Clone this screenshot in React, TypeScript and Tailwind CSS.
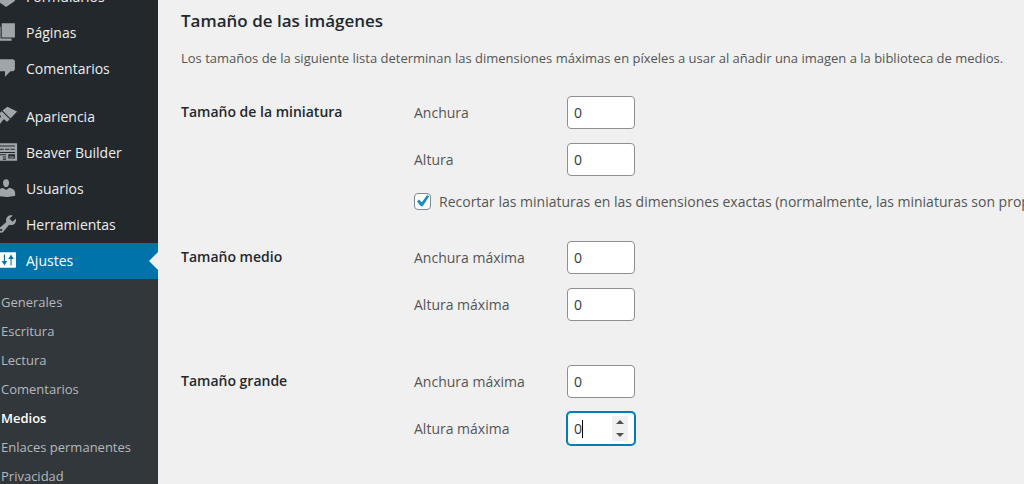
import { useState } from 'react';
import type { ReactNode } from 'react';
import { clsx } from 'clsx';

interface MenuEntry {
  label: string;
  icon: ReactNode;
  gapBefore?: boolean;
  current?: boolean;
}

// Icon shapes, all on a 20x20 grid
const menu: MenuEntry[] = [
  { label: 'Formularios', icon: <path d="M11 1l8 4.500v9L11 20l-8-5.500v-9z" /> },
  { label: 'Páginas', icon: <path d="M7 15V2h12v13H7zM6 16h10v2H2V5h4v11z" /> },
  {
    label: 'Comentarios',
    icon: <path d="M5 2h12c1.100 0 2 .9 2 2v7c0 1.100-.9 2-2 2h-2l-5 5v-5H5c-1.100 0-2-.9-2-2V4c0-1.100.9-2 2-2z" />,
  },
  {
    label: 'Apariencia',
    gapBefore: true,
    icon: (
      <>
        <path d="M12.200 1.500l8.800 4.300-6 6.500-7.300-7.300zM7 5.700l7.300 7.300-1.800 1.700c-.4.4-1 .4-1.400 0l-1.300-1.200c-.4-.4-1-.4-1.400 0-1.200 1.400-2.100 3.300-3.900 4.500-1.300.9-2.800 1.200-3.500.5s-.4-2.200.5-3.500C2.700 13.200 4.600 12.300 6 11.100c.4-.4.4-1 0-1.400L5 8.700c-.4-.4-.4-1 0-1.400z" />
      </>
    ),
  },
  {
    label: 'Beaver Builder',
    icon: (
      <path
        fillRule="evenodd"
        d="M3 2h17c1 0 1 0 1 1v14c0 1 0 1-1 1H3c-1 0-1 0-1-1V3c0-1 0-1 1-1zM5 4v1h14V4zM5 7v1h4V7zM10 7v1h4V7zM15 7v1h4V7zM4 10v1h15v-1zM5 12v1h6v-1zM8 14v1h3v-1zM8 16v1h3v-1zM13 12v4h6v-4zM14 14h4v1h-4z"
      />
    ),
  },
  {
    label: 'Usuarios',
    icon: (
      <path d="M11 9.250c-2.270 0-2.730-3.440-2.730-3.440C8 4.020 8.820 2 10.970 2c2.160 0 2.980 2.020 2.710 3.810 0 0-.41 3.440-2.680 3.440zm0 2.570L13.720 10c3.390 0 5.520 2.330 5.520 4.530v2.490s-4.650 1.130-8.240 1.130c-3.650 0-8.240-1.130-8.240-1.130v-2.490c0-2.250 2.940-4.480 5.470-4.480z" />
    ),
  },
  {
    label: 'Herramientas',
    icon: (
      <path
        transform="translate(2 0)"
        d="M16.680 9.770c-1.340 1.340-3.300 1.670-4.950.99l-5.410 6.520c-.99.990-2.590.99-3.580 0s-.99-2.590 0-3.570l6.520-5.420c-.68-1.650-.35-3.610.99-4.950 1.280-1.280 3.120-1.620 4.720-1.060l-2.890 2.890 2.820 2.820 2.860-2.870c.53 1.580.18 3.390-1.080 4.650zM3.810 16.210c.4.390 1.040.39 1.430 0 .4-.4.400-1.040 0-1.430-.39-.4-1.030-.4-1.430 0-.39.390-.39 1.030 0 1.430z"
      />
    ),
  },
  {
    label: 'Ajustes',
    current: true,
    icon: (
      <path
        fillRule="evenodd"
        d="M4 3h15c1 0 1 0 1 1v12c0 1 0 1-1 1H4c-1 0-1 0-1-1V4c0-1 0-1 1-1zM9 5v6H7l2.500 4 2.500-4h-2V5zM15 15V9h-2l2.500-4L18 9h-2v6z"
      />
    ),
  },
];

const submenu = ['Generales', 'Escritura', 'Lectura', 'Comentarios', 'Medios', 'Enlaces permanentes', 'Privacidad'];

const Sidebar = () => (
  <nav className="w-[158px] shrink-0 overflow-hidden bg-[#32373c]">
    <ul className="-mt-[21px] bg-[#23282d]">
      {menu.map(({ label, icon, gapBefore, current }) => (
        <li key={label} className={clsx(gapBefore && 'mt-3')}>
          <a
            href="#"
            aria-current={current ? 'true' : undefined}
            className={clsx(
              'relative flex h-9 items-center gap-2.5 pb-0.5 text-[14px] whitespace-nowrap',
              current ? 'bg-[#0073aa] text-white' : 'text-[#eee]'
            )}
          >
            <svg
              viewBox="0 0 20 20"
              aria-hidden="true"
              className={clsx(
                '-ml-1.5 h-[22px] w-[22px] shrink-0 overflow-visible fill-current',
                !current && 'text-[#a0a5aa]'
              )}
            >
              {icon}
            </svg>
            {label}
            {current && (
              <span className="absolute top-1/2 right-0 -translate-y-1/2 border-y-9 border-r-9 border-y-transparent border-r-[#f0f0f1]" />
            )}
          </a>
        </li>
      ))}
    </ul>
    <ul className="pt-[9px] pl-px">
      {submenu.map((label) => (
        <li key={label}>
          <a
            href="#"
            className={clsx(
              'flex h-[29px] items-center text-[13px] whitespace-nowrap',
              label === 'Medios' ? 'font-semibold text-white' : 'text-[#b4b9be]'
            )}
          >
            {label}
          </a>
        </li>
      ))}
    </ul>
  </nav>
);

interface NumberFieldProps {
  id: string;
  label: string;
  active: boolean;
  onActivate: () => void;
}

const NumberField = ({ id, label, active, onActivate }: NumberFieldProps) => {
  const [value, setValue] = useState(0);

  return (
    <div className="flex items-center">
      <label htmlFor={id} className="w-[153px] shrink-0">
        {label}
      </label>
      <div className="relative">
        <input
          id={id}
          type="number"
          min={0}
          value={value}
          onFocus={onActivate}
          onChange={(e) => setValue(Number(e.target.value))}
          className={clsx(
            'block h-[33px] w-[68px] appearance-none rounded border bg-white px-1.5 text-[14px] text-[#32373c] outline-none',
            '[&::-webkit-inner-spin-button]:appearance-none',
            active ? 'border-[#007cba] ring-1 ring-[#007cba]' : 'border-[#8c8f94]'
          )}
        />
        {active && (
          <>
            <span className="absolute top-2 left-[15px] h-[18px] w-px bg-black" />
            <div className="absolute inset-y-1 right-[7px] flex w-4 flex-col bg-[#f0f0f0]">
              <button
                type="button"
                aria-label="Aumentar"
                onClick={() => setValue(value + 1)}
                className="flex flex-1 items-center justify-center"
              >
                <svg viewBox="0 0 8 4" className="h-1 w-2 fill-[#505050]">
                  <path d="M0 4l4-4 4 4z" />
                </svg>
              </button>
              <button
                type="button"
                aria-label="Disminuir"
                onClick={() => setValue(Math.max(0, value - 1))}
                className="flex flex-1 items-center justify-center"
              >
                <svg viewBox="0 0 8 4" className="h-1 w-2 fill-[#505050]">
                  <path d="M0 0l4 4 4-4z" />
                </svg>
              </button>
            </div>
          </>
        )}
      </div>
    </div>
  );
};

const sizes = [
  { id: 'thumbnail', title: 'Tamaño de la miniatura', width: 'Anchura', height: 'Altura' },
  { id: 'medium', title: 'Tamaño medio', width: 'Anchura máxima', height: 'Altura máxima' },
  { id: 'large', title: 'Tamaño grande', width: 'Anchura máxima', height: 'Altura máxima' },
];

const App = () => {
  const [active, setActive] = useState('large-h');
  const [crop, setCrop] = useState(true);

  return (
    <div className="flex h-screen overflow-hidden bg-[#f0f0f1] font-['Open_Sans','Noto_Sans',sans-serif] text-[#555]">
      <Sidebar />
      <main className="min-w-0 flex-1 overflow-hidden pl-[23px]">
        <h2 className="pt-[9px] text-[17px] leading-6 font-semibold text-[#23282d]">Tamaño de las imágenes</h2>
        <p className="mt-[15px] text-[13px] leading-5 whitespace-nowrap">
          Los tamaños de la siguiente lista determinan las dimensiones máximas en píxeles a usar al añadir una imagen a
          la biblioteca de medios.
        </p>
        <form className="mt-7 text-[14px]">
          {sizes.map(({ id, title, width, height }) => (
            <div key={id} role="group" aria-labelledby={id} className="flex">
              <h3 id={id} className="w-[233px] shrink-0 pt-1.5 leading-5 font-semibold text-[#23282d]">
                {title}
              </h3>
              <div className={clsx('flex flex-col gap-3.5', id === 'thumbnail' ? 'pb-[29px]' : 'pb-11')}>
                <NumberField
                  id={`${id}-w`}
                  label={width}
                  active={active === `${id}-w`}
                  onActivate={() => setActive(`${id}-w`)}
                />
                <NumberField
                  id={`${id}-h`}
                  label={height}
                  active={active === `${id}-h`}
                  onActivate={() => setActive(`${id}-h`)}
                />
                {id === 'thumbnail' && (
                  <label className="relative flex h-[22px] items-center gap-2 whitespace-nowrap">
                    <input
                      type="checkbox"
                      checked={crop}
                      onChange={(e) => setCrop(e.target.checked)}
                      className="h-[17px] w-[17px] shrink-0 appearance-none rounded border border-[#7e8993] bg-white"
                    />
                    {crop && (
                      <svg viewBox="2 2 16 16" className="absolute left-0 h-[17px] w-[17px] fill-[#1e8cbe]">
                        <path d="M14.300 3.900l1.900 1.300-6 9.300H8.500L4.800 9.900l1.900-1.800 2.700 2.500z" />
                      </svg>
                    )}
                    Recortar las miniaturas en las dimensiones exactas (normalmente, las miniaturas son proporcionales)
                  </label>
                )}
              </div>
            </div>
          ))}
        </form>
      </main>
    </div>
  );
};

export default App;
